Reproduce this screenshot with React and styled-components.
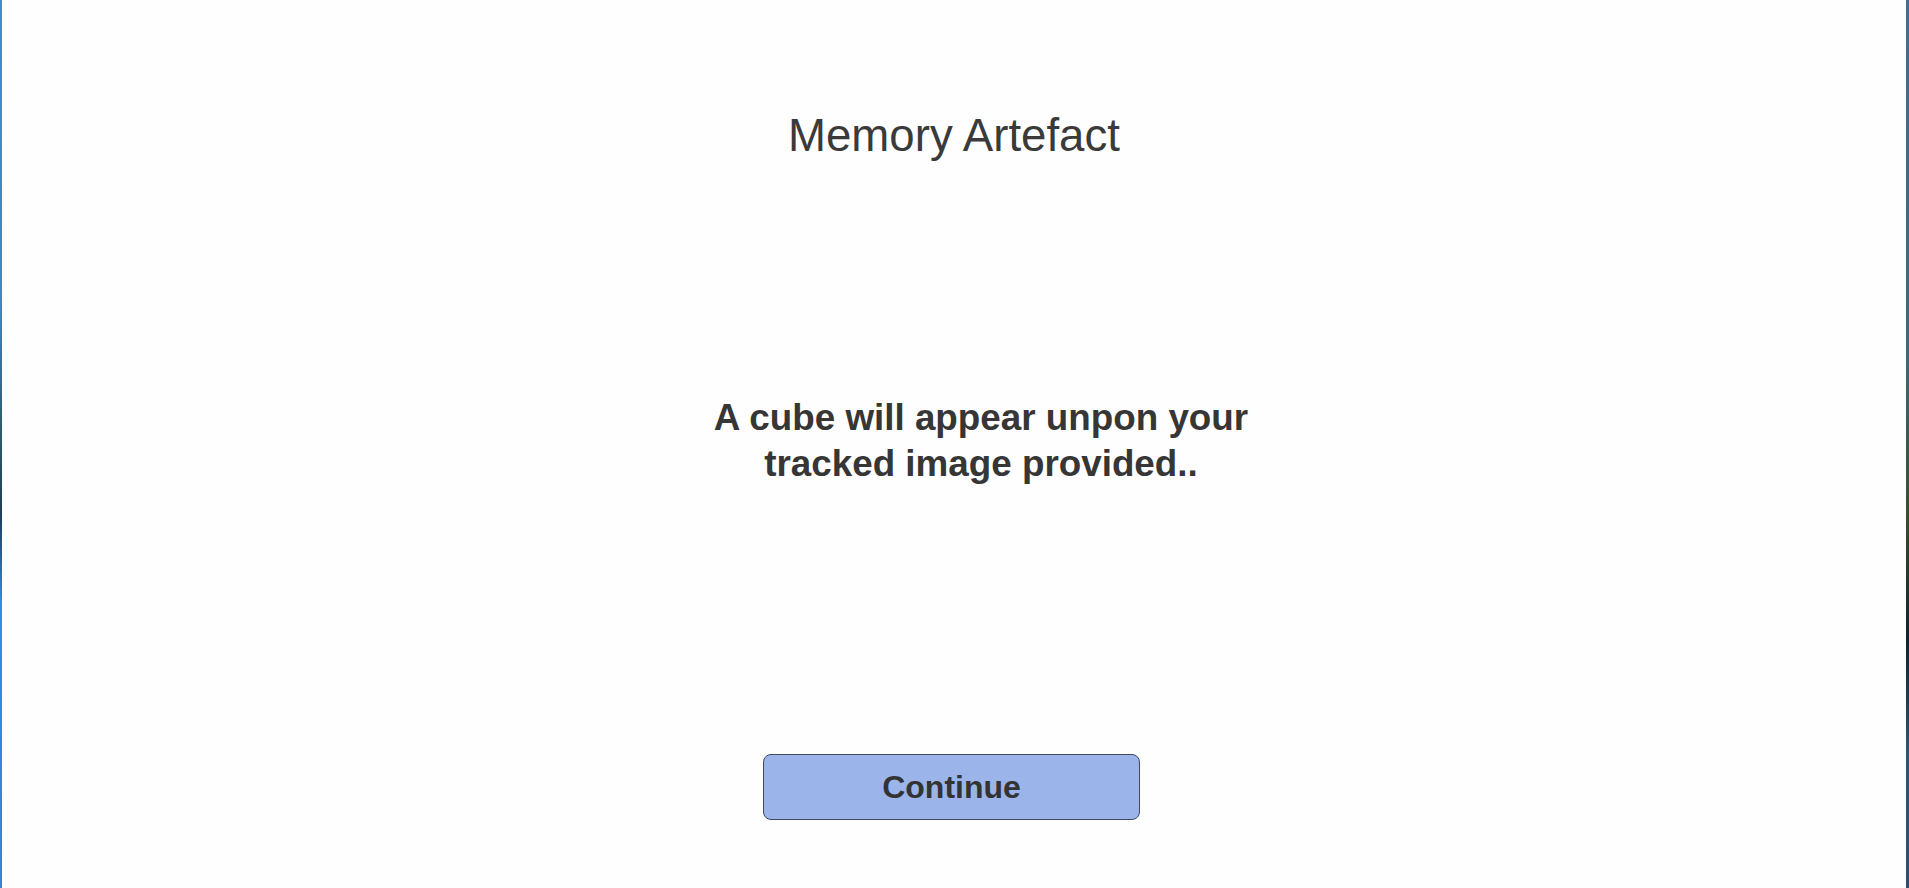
import styled, { createGlobalStyle } from 'styled-components';

const GlobalStyle = createGlobalStyle`
    html, body {
        margin: 0;
        padding: 0;
        height: 100%;
        background: #fefefe;
    }
    #root {
        height: 100%;
    }
`;

const Frame = styled.div`
    display: flex;
    height: 888px;
    width: 1909px;
    overflow: hidden;
`;

const EdgeStrip = styled.div`
    width: ${({ $width }) => $width}px;
    flex-shrink: 0;
    background: ${({ $side }) =>
        $side === 'left'
            ? 'linear-gradient(180deg, #3b8fd6 0%, #3a86c8 35%, #2f5d6c 48%, #1d3e5a 58%, #2f8ee6 68%, #3384d8 100%)'
            : 'linear-gradient(180deg, #3f6e96 0%, #3a6a7a 40%, #35502a 58%, #0c2430 72%, #2a5878 85%, #2b4f73 100%)'};
`;

const Screen = styled.main`
    flex: 1;
    display: flex;
    flex-direction: column;
    align-items: center;
    padding-top: 110px;
    background: #fefefe;
    font-family: 'Liberation Sans', Arial, sans-serif;
    color: #363636;
`;

const Title = styled.h1`
    margin: 0;
    font-size: 45.6px;
    line-height: 52px;
    font-weight: 400;
    color: #3a3a3a;
`;

const Message = styled.p`
    margin: 233px 0 0 54px;
    width: 600px;
    font-size: 36.8px;
    line-height: 46px;
    font-weight: 700;
    text-align: center;
`;

const ContinueButton = styled.button`
    margin: 267px 5px 0 0;
    width: 377px;
    height: 66px;
    border: 1px solid #3e4b5e;
    border-radius: 8px;
    background: #9bb5ea;
    font-family: 'Liberation Sans', Arial, sans-serif;
    font-size: 32px;
    font-weight: 700;
    color: #333;
    cursor: pointer;
`;

export default function App() {
    return (
        <>
            <GlobalStyle />
            <Frame>
                <EdgeStrip $side="left" $width={2} />
                <Screen>
                    <Title>Memory Artefact</Title>
                    <Message>
                        A cube will appear unpon your tracked image provided..
                    </Message>
                    <ContinueButton type="button">Continue</ContinueButton>
                </Screen>
                <EdgeStrip $side="right" $width={3} />
            </Frame>
        </>
    );
}
